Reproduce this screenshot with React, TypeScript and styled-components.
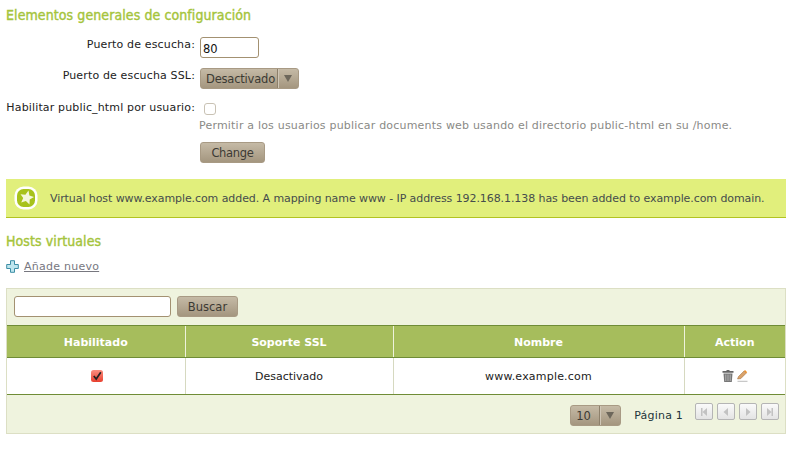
import React from 'react';
import styled, { createGlobalStyle } from 'styled-components';

const GlobalStyle = createGlobalStyle`
    body {
        margin: 0;
        background: #fff;
        font-family: "DejaVu Sans", Verdana, sans-serif;
        font-size: 11px;
        color: #222;
    }
`

const Page = styled.div`
    width: 780px;
    padding: 7px 0 0 6px;
`
const Heading = styled.h2`
    margin: 0;
    font-family: "DejaVu Sans Condensed", "DejaVu Sans", sans-serif;
    font-size: 14px;
    line-height: 17px;
    font-weight: normal;
    letter-spacing: 0.09px;
    -webkit-text-stroke: 0.4px #a5c43c;
    color: #a5c43c;
`
const Form = styled.div`
    display: grid;
    grid-template-columns: 189px auto;
    column-gap: 5px;
    justify-content: start;
    margin-top: 13px;
`
const Label = styled.label`
    text-align: right;
    white-space: nowrap;
    line-height: 15px;
    letter-spacing: 0.15px;
    color: #222;
`
const Field = styled.div<{ $height: number }>`
    display: flex;
    align-items: flex-start;
    height: ${(p) => p.$height}px;
`
const TextInput = styled.div<{ $width: number }>`
    box-sizing: border-box;
    width: ${(p) => p.$width}px;
    height: 21px;
    padding: 3px 2px 0;
    border: 1px solid #a39171;
    border-radius: 3px;
    background: #fff;
    font-size: 11.5px;
    line-height: 16px;
    color: #111;
`
const Button = styled.div<{ $width: number }>`
    box-sizing: border-box;
    display: inline-flex;
    align-items: center;
    justify-content: center;
    width: ${(p) => p.$width}px;
    height: 21px;
    border: 1px solid #a89a84;
    border-radius: 3px;
    background: linear-gradient(#c5baa6, #a4967f);
    color: #3c3a34;
    font-size: 11.5px;
`
const ChangeButton = styled(Button)`
    letter-spacing: -0.3px;
`
const Select = styled.div`
    box-sizing: border-box;
    display: inline-flex;
    height: 21px;
    border: 1px solid #a89a84;
    border-radius: 3px;
    background: linear-gradient(#c5baa6, #a4967f);
    color: #3c3a34;
    font-size: 11.5px;
    line-height: 20px;
`
const SelectValue = styled.span<{ $width: number }>`
    width: ${(p) => p.$width}px;
    padding-left: 5px;
    box-sizing: border-box;
    letter-spacing: -0.2px;
    white-space: nowrap;
`
const SelectArrow = styled.span`
    display: flex;
    align-items: center;
    justify-content: center;
    width: 21px;
    box-sizing: border-box;
    border-left: 1px solid #8d806b;
    box-shadow: inset 1px 0 0 #cfc6b6;
    &::after {
        content: "";
        border-style: solid;
        border-width: 7px 4px 0;
        border-color: #6d675b transparent transparent;
    }
`
const Checkbox = styled.span`
    box-sizing: border-box;
    width: 12px;
    height: 12px;
    margin: 3px 0 0 4px;
    border: 1px solid #c9c2b4;
    border-radius: 3px;
    background: #fff;
`
const Hint = styled.div`
    height: 24px;
    line-height: 16px;
    letter-spacing: 0.2px;
    margin-left: -1px;
    color: #8a8a86;
    white-space: nowrap;
`
const Notice = styled.div`
    box-sizing: border-box;
    display: flex;
    align-items: center;
    gap: 12px;
    height: 39px;
    margin-top: 16px;
    padding-left: 8px;
    background: #e1ef7c;
    border-bottom: 1px solid #b2c322;
    color: #454c4c;
    letter-spacing: -0.08px;
    white-space: nowrap;
`
const SectionHeading = styled(Heading)`
    margin-top: 15px;
`
const AddLink = styled.div`
    display: flex;
    align-items: center;
    gap: 5px;
    height: 18px;
    margin-top: 7px;
    color: #77777f;
    letter-spacing: 0.25px;
    a {
        color: inherit;
        text-decoration: underline;
    }
`
const Panel = styled.div`
    margin-top: 13px;
    border: 1px solid #dcdfc4;
    background: #eff3de;
`
const SearchBar = styled.div`
    display: flex;
    gap: 6px;
    padding: 7px 7px 8px;
`
const Table = styled.table`
    width: 100%;
    border-collapse: collapse;
    table-layout: fixed;
    background: #fff;
    th {
        box-sizing: border-box;
        height: 32px;
        padding: 1px 0 0;
        background: #a6bd5c;
        color: #fff;
        font-size: 11px;
        font-weight: bold;
        border-top: 1px solid #6f8c36;
        border-bottom: 1px solid #6f8c36;
        border-left: 1px solid #eef2dc;
    }
    td {
        height: 36px;
        padding: 0;
        text-align: center;
        color: #222;
        border-bottom: 1px solid #6f8c36;
        border-left: 1px solid #d6d9c0;
    }
    th:first-child, td:first-child {
        border-left: none;
    }
`
const HostName = styled.span`
    letter-spacing: 0.2px;
`
const Footer = styled.div`
    box-sizing: border-box;
    display: flex;
    align-items: center;
    justify-content: flex-end;
    height: 38px;
    padding: 2px 6px 0 0;
`
const PageLabel = styled.span`
    margin: 0 12px 0 13px;
    letter-spacing: 0.2px;
    color: #22333a;
`
const Pager = styled.div`
    display: flex;
    align-self: flex-start;
    gap: 4px;
    margin-top: 6px;
`
const PagerButton = styled.span`
    box-sizing: border-box;
    display: flex;
    align-items: center;
    justify-content: center;
    width: 18px;
    height: 17px;
    border: 1px solid #b5b5b5;
    border-radius: 2px;
    background: linear-gradient(#fafafa, #e4e4e4);
`
const Icons = styled.span`
    display: inline-flex;
    align-items: center;
    gap: 3px;
    margin-top: -2px;
    vertical-align: middle;
`
const CheckSvg = styled.svg`
    vertical-align: middle;
    margin: -2px 0 0 2px;
`

const columns: [string, string][] = [
    ['Habilitado', '178px'],
    ['Soporte SSL', '208px'],
    ['Nombre', '291px'],
    ['Action', '101px'],
]

const StarBadge = () => (
    <svg width="24" height="24" viewBox="0 0 24 24">
        <rect x="0.5" y="0.5" width="23" height="23" rx="9" fill="#fff" />
        <rect x="3" y="3" width="18" height="18" rx="6.5" fill="#a7c21c" />
        <path d="M14.500 4.500l.9 4.900 4.600 1.700-4.300 2.400-.2 4.900-3.600-3.300-4.700 1.300 2-4.500L6.500 8.200l4.900.6z" fill="#f4f7dc" />
    </svg>
)

const PlusIcon = () => (
    <svg width="13" height="13" viewBox="0 0 13 13">
        <path d="M4.500.7h4v3.800h3.800v4H8.500v3.800h-4V8.500H.7v-4h3.800z" fill="#bfe6ee" stroke="#3d8ea6" strokeWidth="1" strokeLinejoin="round" />
    </svg>
)

const CheckedBox = () => (
    <CheckSvg width="12" height="12" viewBox="0 0 12 12">
        <defs>
            <linearGradient id="checkFill" x1="0" y1="0" x2="0" y2="1">
                <stop offset="0" stopColor="#fb8f80" />
                <stop offset="1" stopColor="#e8402f" />
            </linearGradient>
        </defs>
        <rect x="0" y="0" width="12" height="12" rx="2.500" fill="url(#checkFill)" />
        <path d="M2.800 6l2.400 3L9.800 2.200" fill="none" stroke="#222" strokeWidth="1.700" />
    </CheckSvg>
)

const TrashIcon = () => (
    <svg width="12" height="12" viewBox="0 0 12 12">
        <path d="M4.500 0h3v1H11.500v1.800H.5V1h4z" fill="#666" />
        <path d="M1.500 3.500h9L9.800 12H2.200z" fill="#777" />
        <path d="M3.800 4.500v6.500M6 4.500v6.500M8.200 4.500v6.500" stroke="#c4c4c4" strokeWidth="0.800" />
    </svg>
)

const PencilIcon = () => (
    <svg width="11" height="12" viewBox="0 0 11 12">
        <path d="M0.500 9l1-2.500L7 1l2.200 2.200-5.500 5.500z" fill="#d9a36c" stroke="#9a6a3c" strokeWidth="0.500" />
        <path d="M7 1l1-1 2.200 2.200-1 1z" fill="#f0922a" />
        <path d="M0.500 11.300h10" stroke="#bbb" />
    </svg>
)

const PagerIcon: React.FC<{ kind: 'first' | 'prev' | 'next' | 'last' }> = ({ kind }) => {
    const paths = {
        first: 'M2 1h1.500v8H2zM8 1v8L3.500 5z',
        prev: 'M7 1v8L2.500 5z',
        next: 'M3 1v8l4.500-4z',
        last: 'M8 1h-1.500v8H8zM2 1v8l4.500-4z',
    }
    return (
        <svg width="10" height="10" viewBox="0 0 10 10">
            <path d={paths[kind]} fill="#c2c2c2" />
        </svg>
    )
}

export default function App() {
    return (
        <Page>
            <GlobalStyle />
            <Heading>Elementos generales de configuración</Heading>
            <Form>
                <Label>Puerto de escucha:</Label>
                <Field $height={31}>
                    <TextInput $width={59}>80</TextInput>
                </Field>
                <Label>Puerto de escucha SSL:</Label>
                <Field $height={32}>
                    <Select>
                        <SelectValue $width={76}>Desactivado</SelectValue>
                        <SelectArrow />
                    </Select>
                </Field>
                <Label>Habilitar public_html por usuario:</Label>
                <Field $height={18}>
                    <Checkbox />
                </Field>
                <span />
                <Hint>Permitir a los usuarios publicar documents web usando el directorio public-html en su /home.</Hint>
                <span />
                <Field $height={21}>
                    <ChangeButton $width={65}>Change</ChangeButton>
                </Field>
            </Form>
            <Notice>
                <StarBadge />
                <span>Virtual host www.example.com added. A mapping name www - IP address 192.168.1.138 has been added to example.com domain.</span>
            </Notice>
            <SectionHeading>Hosts virtuales</SectionHeading>
            <AddLink>
                <PlusIcon />
                <a>Añade nuevo</a>
            </AddLink>
            <Panel>
                <SearchBar>
                    <TextInput $width={157} />
                    <Button $width={61}>Buscar</Button>
                </SearchBar>
                <Table>
                    <colgroup>
                        {columns.map(([name, width]) => (
                            <col key={name} width={width} />
                        ))}
                    </colgroup>
                    <thead>
                        <tr>
                            {columns.map(([name]) => (
                                <th key={name}>{name}</th>
                            ))}
                        </tr>
                    </thead>
                    <tbody>
                        <tr>
                            <td><CheckedBox /></td>
                            <td>Desactivado</td>
                            <td><HostName>www.example.com</HostName></td>
                            <td>
                                <Icons>
                                    <TrashIcon />
                                    <PencilIcon />
                                </Icons>
                            </td>
                        </tr>
                    </tbody>
                </Table>
                <Footer>
                    <Select>
                        <SelectValue $width={28}>10</SelectValue>
                        <SelectArrow />
                    </Select>
                    <PageLabel>Página 1</PageLabel>
                    <Pager>
                        <PagerButton><PagerIcon kind="first" /></PagerButton>
                        <PagerButton><PagerIcon kind="prev" /></PagerButton>
                        <PagerButton><PagerIcon kind="next" /></PagerButton>
                        <PagerButton><PagerIcon kind="last" /></PagerButton>
                    </Pager>
                </Footer>
            </Panel>
        </Page>
    )
}
